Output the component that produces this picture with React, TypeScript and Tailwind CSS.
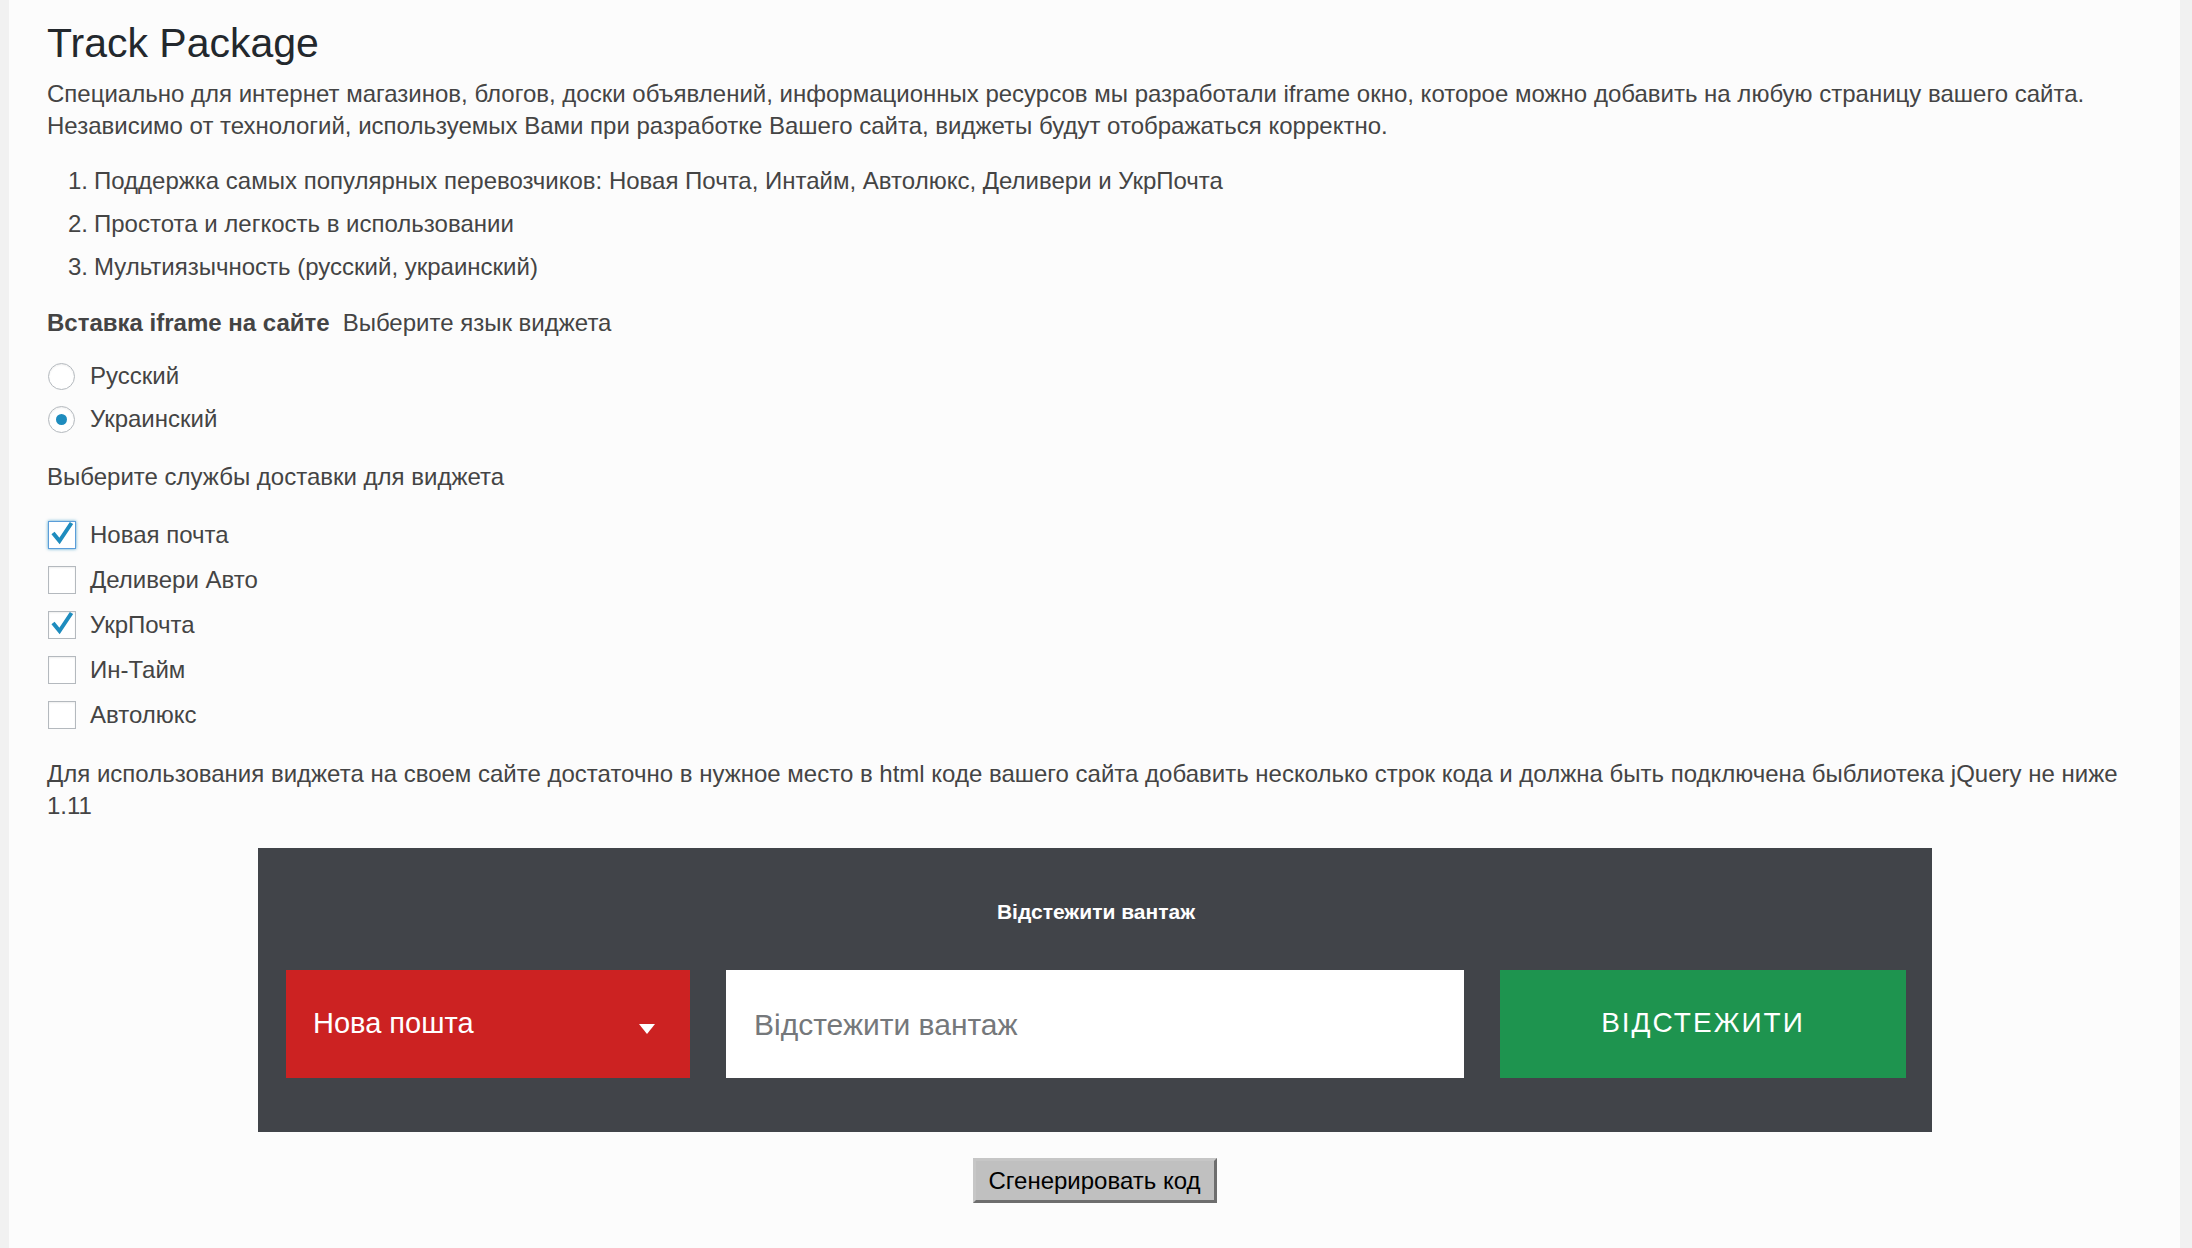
import { useState } from "react";

const services = [
  { name: "Новая почта", checked: true, focused: true },
  { name: "Деливери Авто", checked: false },
  { name: "УкрПочта", checked: true },
  { name: "Ин-Тайм", checked: false },
  { name: "Автолюкс", checked: false },
];

const features = [
  "Поддержка самых популярных перевозчиков: Новая Почта, Интайм, Автолюкс, Деливери и УкрПочта",
  "Простота и легкость в использовании",
  "Мультиязычность (русский, украинский)",
];

const Check = () => (
  <svg viewBox="0 0 28 28" className="absolute -top-[3px] -left-[1px] w-[28px] h-[28px]">
    <path d="M5 14 L11.5 22 L23.5 4" fill="none" stroke="#1e8cbe" strokeWidth="4" strokeLinecap="butt" strokeLinejoin="miter" />
  </svg>
);

export default function App() {
  const [lang, setLang] = useState("uk");

  return (
    <div className="min-h-screen bg-[#f1f1f1] flex font-['Liberation_Sans',Arial,sans-serif] text-[#444]">
      <div className="flex-1 ml-[9px] mr-[12px] bg-[#fcfcfc] pl-[38px] pr-[38px] pt-[19px] pb-10">
        <h1 className="text-[41px] leading-[48px] text-[#23282d] font-normal">Track Package</h1>

        <p className="mt-[11px] text-[24px] leading-[32px]">
          Специально для интернет магазинов, блогов, доски объявлений, информационных ресурсов мы разработали iframe окно, которое можно добавить на любую страницу вашего сайта. Независимо от технологий, используемых Вами при разработке Вашего сайта, виджеты будут отображаться корректно.
        </p>

        <ol className="mt-[23px] flex flex-col gap-[11px] pl-[21px] text-[24px] leading-[32px]">
          {features.map((f, i) => (
            <li key={i} className="flex">
              <span className="w-[26px]">{i + 1}.</span>
              <span>{f}</span>
            </li>
          ))}
        </ol>

        <div className="mt-[24px] text-[24px] leading-[32px]">
          <span className="font-bold">Вставка iframe на сайте</span>
          <span className="ml-[13px]">Выберите язык виджета</span>
        </div>

        <div className="mt-[21px] flex flex-col gap-[11px] text-[24px] leading-[32px]">
          {[
            { id: "ru", label: "Русский" },
            { id: "uk", label: "Украинский" },
          ].map((r) => (
            <label key={r.id} className="flex items-center h-[32px] cursor-pointer" onClick={() => setLang(r.id)}>
              <span className="relative ml-[1px] w-[27px] h-[27px] rounded-full border border-[#b4b9be] bg-white shadow-[inset_0_1px_2px_rgba(0,0,0,0.07)] flex items-center justify-center mr-[15px]">
                {lang === r.id && <span className="w-[11px] h-[11px] rounded-full bg-[#1e8cbe]" />}
              </span>
              {r.label}
            </label>
          ))}
        </div>

        <div className="mt-[26px] text-[24px] leading-[32px]">Выберите службы доставки для виджета</div>

        <div className="mt-[26px] flex flex-col gap-[13px] text-[24px] leading-[32px]">
          {services.map((s) => (
            <label key={s.name} className="flex items-center h-[32px]">
              <span
                className={
                  s.focused
                    ? "relative ml-[1px] w-[28px] h-[28px] border border-[#5b9dd9] bg-white shadow-[0_0_3px_rgba(30,140,190,0.8)] mr-[14px]"
                    : "relative ml-[1px] w-[28px] h-[28px] border border-[#b4b9be] bg-white shadow-[inset_0_1px_2px_rgba(0,0,0,0.07)] mr-[14px]"
                }
              >
                {s.checked && <Check />}
              </span>
              {s.name}
            </label>
          ))}
        </div>

        <p className="mt-[27px] text-[24px] leading-[32px]">
          Для использования виджета на своем сайте достаточно в нужное место в html коде вашего сайта добавить несколько строк кода и должна быть подключена быблиотека jQuery не ниже 1.11
        </p>

        <div className="mt-[26px] ml-[211px] w-[1674px] bg-[#414449] pt-[51px] pb-[54px] pl-[28px] pr-[26px]">
          <div className="text-center text-white font-bold text-[21px] leading-[26px]">Відстежити вантаж</div>
          <div className="mt-[45px] flex gap-[36px] h-[108px]">
            <div className="w-[404px] bg-[#cc2222] flex items-center justify-between pl-[27px] pr-[35px] text-white text-[29px]">
              <span>Нова пошта</span>
              <svg viewBox="0 0 16 10" className="w-[16px] h-[10px] mt-[10px]">
                <path d="M0 0 L16 0 L8 10 Z" fill="#fff" />
              </svg>
            </div>
            <div className="flex-1 bg-white flex items-center pl-[28px] text-[30px] text-[#75787b]">Відстежити вантаж</div>
            <button className="w-[406px] bg-[#1e944f] text-white text-[28px] tracking-[2px] uppercase pb-[3px]">Відстежити</button>
          </div>
        </div>

        <div className="mt-[26px] flex justify-center">
          <button className="h-[45px] w-[244px] bg-[#c0c0c0] border-[3px] border-t-[#c6c6c6] border-l-[#c6c6c6] border-r-[#6e6e6e] border-b-[#6e6e6e] text-black text-[24px] leading-none">
            Сгенерировать код
          </button>
        </div>
      </div>
    </div>
  );
}
